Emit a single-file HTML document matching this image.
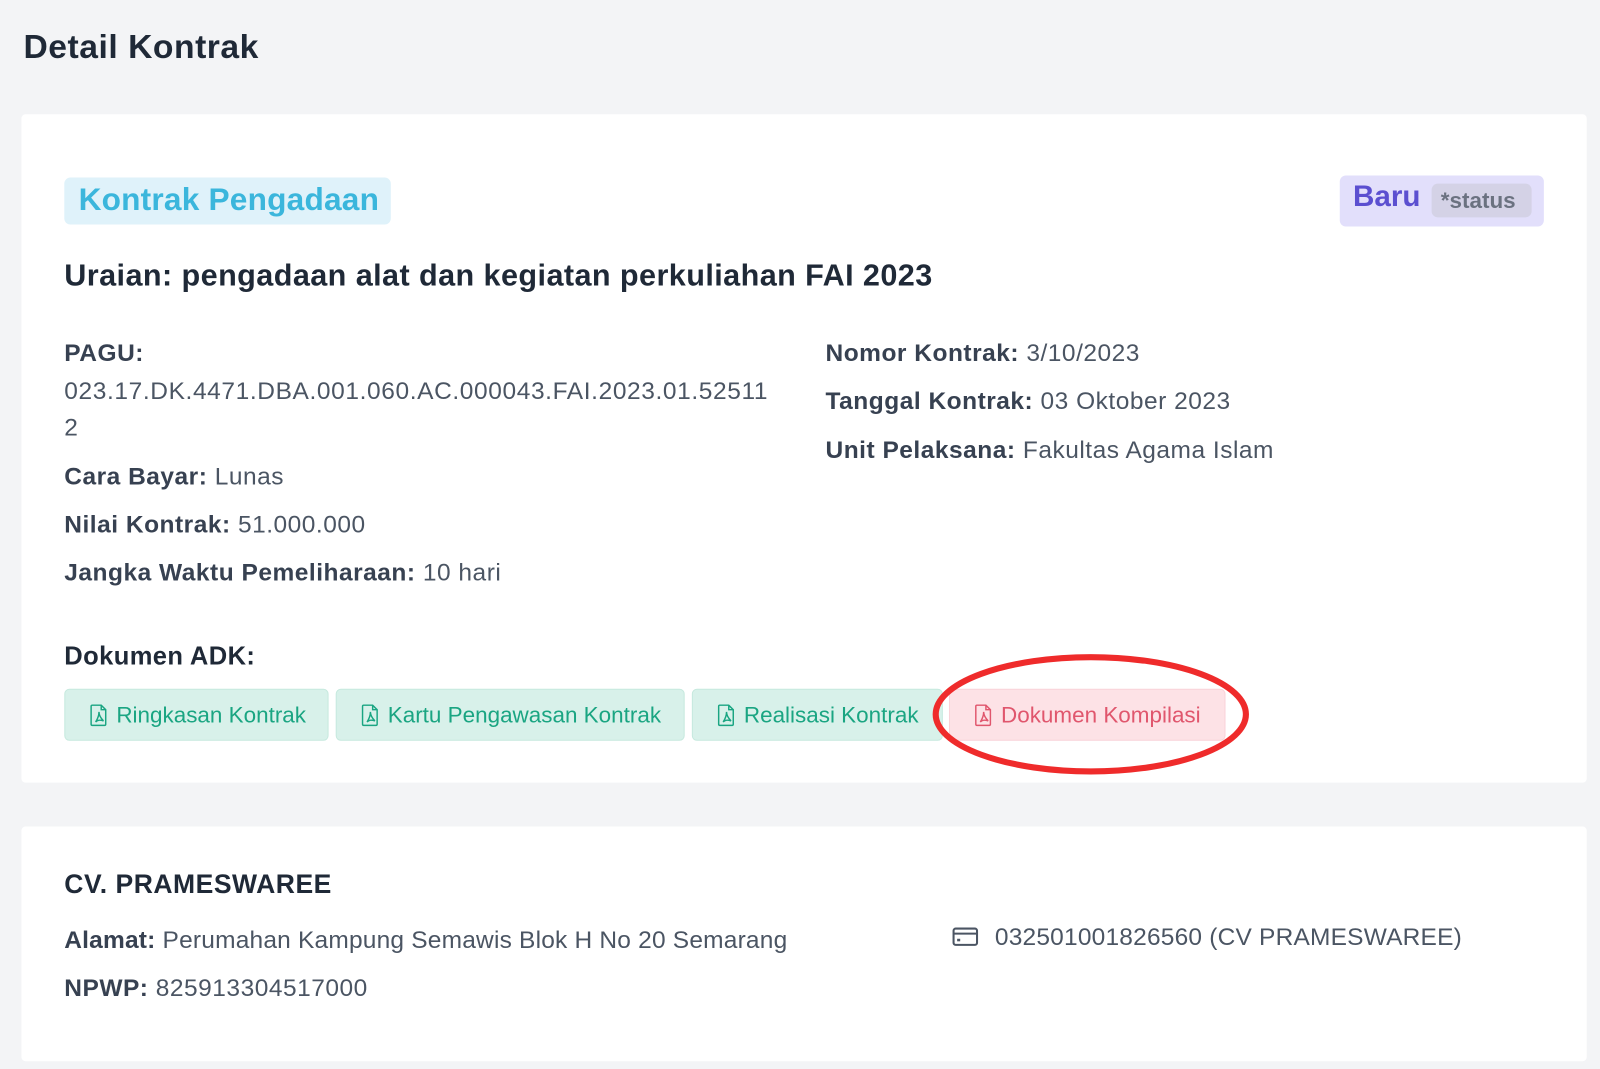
<!DOCTYPE html>
<html><head><meta charset="utf-8"><style>
*{margin:0;padding:0;box-sizing:border-box}
body{width:1600px;height:1069px;background:#f3f4f6;font-family:"Liberation Sans",sans-serif;color:#374151;position:relative;overflow:hidden}
#w{position:absolute;left:0;top:0;width:1568px;height:1048px;transform:scale(1.0204);transform-origin:0 0}
.abs{position:absolute;white-space:nowrap}
.card{position:absolute;left:21px;width:1534px;background:#fff;border-radius:4px}
.t{font-size:24px;letter-spacing:0.5px;color:#4b5563}
.t b{color:#374151}
.btn{position:absolute;top:675px;height:51px;border-radius:5px;background:#d8f1ea;border:1px solid #c6e9de;color:#1aa582;font-size:22px;display:flex;align-items:center;padding-left:24px;letter-spacing:0}
.btn svg{margin-right:8px}
</style></head><body><div id="w">
<div class="abs" style="left:23px;top:27px;font-size:33px;font-weight:bold;color:#1f2937;letter-spacing:0.5px">Detail Kontrak</div>
<div class="card" style="top:112px;height:655px"></div>
<div class="abs" style="left:63px;top:174px;width:320px;height:46px;background:#dff2fa;border-radius:6px;color:#3bb6dc;font-size:31px;font-weight:bold;padding:4px 0 0 14px;letter-spacing:0.2px">Kontrak Pengadaan</div>
<div class="abs" style="left:1313px;top:172px;width:200px;height:50px;background:#e2dffb;border-radius:6px"></div>
<div class="abs" style="left:1326px;top:177px;font-size:29px;font-weight:bold;color:#5b4fd0">Baru</div>
<div class="abs" style="left:1403px;top:180px;width:98px;height:33px;background:#d4d2e6;border-radius:6px;color:#6b7280;font-size:22px;font-weight:bold;padding:4px 0 0 9px">*status</div>
<div class="abs" style="left:63px;top:254px;font-size:30px;font-weight:bold;color:#1f2937;letter-spacing:0.4px">Uraian: pengadaan alat dan kegiatan perkuliahan FAI 2023</div>
<div class="abs t" style="left:63px;top:333px"><b>PAGU:</b></div>
<div class="abs t" style="left:63px;top:370px;letter-spacing:0.6px">023.17.DK.4471.DBA.001.060.AC.000043.FAI.2023.01.52511</div>
<div class="abs t" style="left:63px;top:406px">2</div>
<div class="abs t" style="left:63px;top:454px"><b>Cara Bayar:</b> Lunas</div>
<div class="abs t" style="left:63px;top:501px"><b>Nilai Kontrak:</b> 51.000.000</div>
<div class="abs t" style="left:63px;top:548px"><b>Jangka Waktu Pemeliharaan:</b> 10 hari</div>
<div class="abs t" style="left:809px;top:333px"><b>Nomor Kontrak:</b> 3/10/2023</div>
<div class="abs t" style="left:809px;top:380px"><b>Tanggal Kontrak:</b> 03 Oktober 2023</div>
<div class="abs t" style="left:809px;top:428px"><b>Unit Pelaksana:</b> Fakultas Agama Islam</div>
<div class="abs" style="left:63px;top:629px;font-size:25px;font-weight:bold;color:#1f2937;letter-spacing:0.4px">Dokumen ADK:</div>
<svg width="0" height="0" style="position:absolute"><defs><symbol id="pdf" viewBox="0 0 16 20"><path d="M2 1h8l4 4v13a1 1 0 0 1-1 1H2a1 1 0 0 1-1-1V2a1 1 0 0 1 1-1zM10 1v4h4M5 16c2-3 3-6 3-9 0 3 2 6 4 8-3-1-5-1-7 1z" fill="none" stroke="currentColor" stroke-width="1.3"/></symbol></defs></svg>
<div class="btn" style="left:63px;width:259px"><svg width="18" height="22"><use href="#pdf"/></svg>Ringkasan Kontrak</div>
<div class="btn" style="left:329px;width:342px"><svg width="18" height="22"><use href="#pdf"/></svg>Kartu Pengawasan Kontrak</div>
<div class="btn" style="left:678px;width:246px"><svg width="18" height="22"><use href="#pdf"/></svg>Realisasi Kontrak</div>
<div class="btn" style="left:930px;width:271px;background:#fde2e6;border-color:#f9d2d8;color:#e0566d"><svg width="18" height="22"><use href="#pdf"/></svg>Dokumen Kompilasi</div>
<svg class="abs" style="left:910px;top:636px" width="320" height="130"><ellipse cx="159" cy="64" rx="152" ry="56" fill="none" stroke="#ef2b2b" stroke-width="6"/></svg>
<div class="card" style="top:810px;height:230px"></div>
<div class="abs" style="left:63px;top:851px;font-size:26px;font-weight:bold;color:#1f2937;letter-spacing:0.5px">CV. PRAMESWAREE</div>
<div class="abs t" style="left:63px;top:908px;letter-spacing:0.2px"><b>Alamat:</b> Perumahan Kampung Semawis Blok H No 20 Semarang</div>
<div class="abs t" style="left:63px;top:955px"><b>NPWP:</b> 825913304517000</div>
<svg class="abs" style="left:933px;top:908px" width="26" height="20" viewBox="0 0 26 20"><rect x="1.5" y="2" width="23" height="16" rx="2" fill="none" stroke="#4b5563" stroke-width="2"/><line x1="1.5" y1="7" x2="24.5" y2="7" stroke="#4b5563" stroke-width="2"/><rect x="5" y="12" width="3" height="2.5" fill="#4b5563"/></svg>
<div class="abs t" style="left:975px;top:905px;letter-spacing:0.2px">032501001826560 (CV PRAMESWAREE)</div>
</div></body></html>
